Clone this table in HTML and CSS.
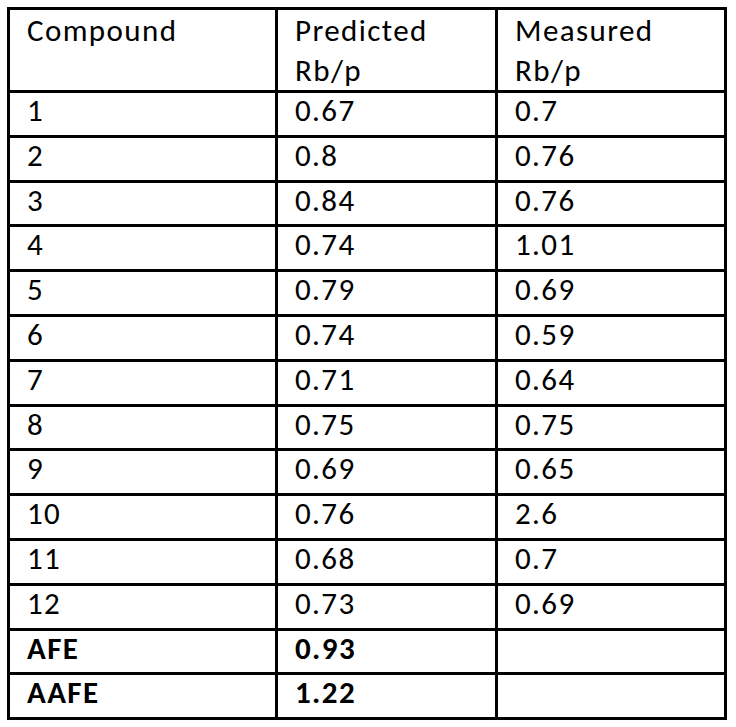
FILE: index.html
```html
<!DOCTYPE html>
<html>
<head>
<meta charset="utf-8">
<link rel="stylesheet" href="styles.css">
</head>
<body>
<table class="data">
  <colgroup>
    <col class="c1"><col class="c2"><col class="c3">
  </colgroup>
  <thead>
    <tr class="head"><th>Compound</th><th>Predicted<br>Rb/p</th><th>Measured<br>Rb/p</th></tr>
  </thead>
  <tbody>
    <tr><td>1</td><td>0.67</td><td>0.7</td></tr>
    <tr><td>2</td><td>0.8</td><td>0.76</td></tr>
    <tr><td>3</td><td>0.84</td><td>0.76</td></tr>
    <tr><td>4</td><td>0.74</td><td>1.01</td></tr>
    <tr><td>5</td><td>0.79</td><td>0.69</td></tr>
    <tr><td>6</td><td>0.74</td><td>0.59</td></tr>
    <tr><td>7</td><td>0.71</td><td>0.64</td></tr>
    <tr><td>8</td><td>0.75</td><td>0.75</td></tr>
    <tr><td>9</td><td>0.69</td><td>0.65</td></tr>
    <tr><td>10</td><td>0.76</td><td>2.6</td></tr>
    <tr><td>11</td><td>0.68</td><td>0.7</td></tr>
    <tr><td>12</td><td>0.73</td><td>0.69</td></tr>
    <tr class="bold"><td>AFE</td><td>0.93</td><td></td></tr>
    <tr class="bold"><td>AAFE</td><td>1.22</td><td></td></tr>
  </tbody>
</table>
</body>
</html>
```
FILE: styles.css
```css
html, body {
  background: #ffffff;
}
body {
  margin: 7px;
  font-family: "Carlito", "Lato", "Liberation Sans", sans-serif;
  font-size: 31px;
  letter-spacing: 1.4px;
  color: #000000;
}
.data {
  border-collapse: separate;
  border-spacing: 0;
  table-layout: fixed;
  width: 720px;
  border-left: 3px solid #000;
  border-top: 3px solid #000;
}
.c1 { width: 268px; }
.c2 { width: 220px; }
.c3 { width: 229px; }
.data th, .data td {
  border-right: 3px solid #000;
  border-bottom: 3px solid #000;
  padding: 0 0 0 17px;
  text-align: left;
  vertical-align: top;
  font-weight: normal;
  box-sizing: border-box;
}
.data th {
  height: 83px;
  line-height: 40px;
}
.data td {
  height: 44.8px;
  line-height: 34px;
}
.data .bold td {
  font-weight: bold;
}
```
